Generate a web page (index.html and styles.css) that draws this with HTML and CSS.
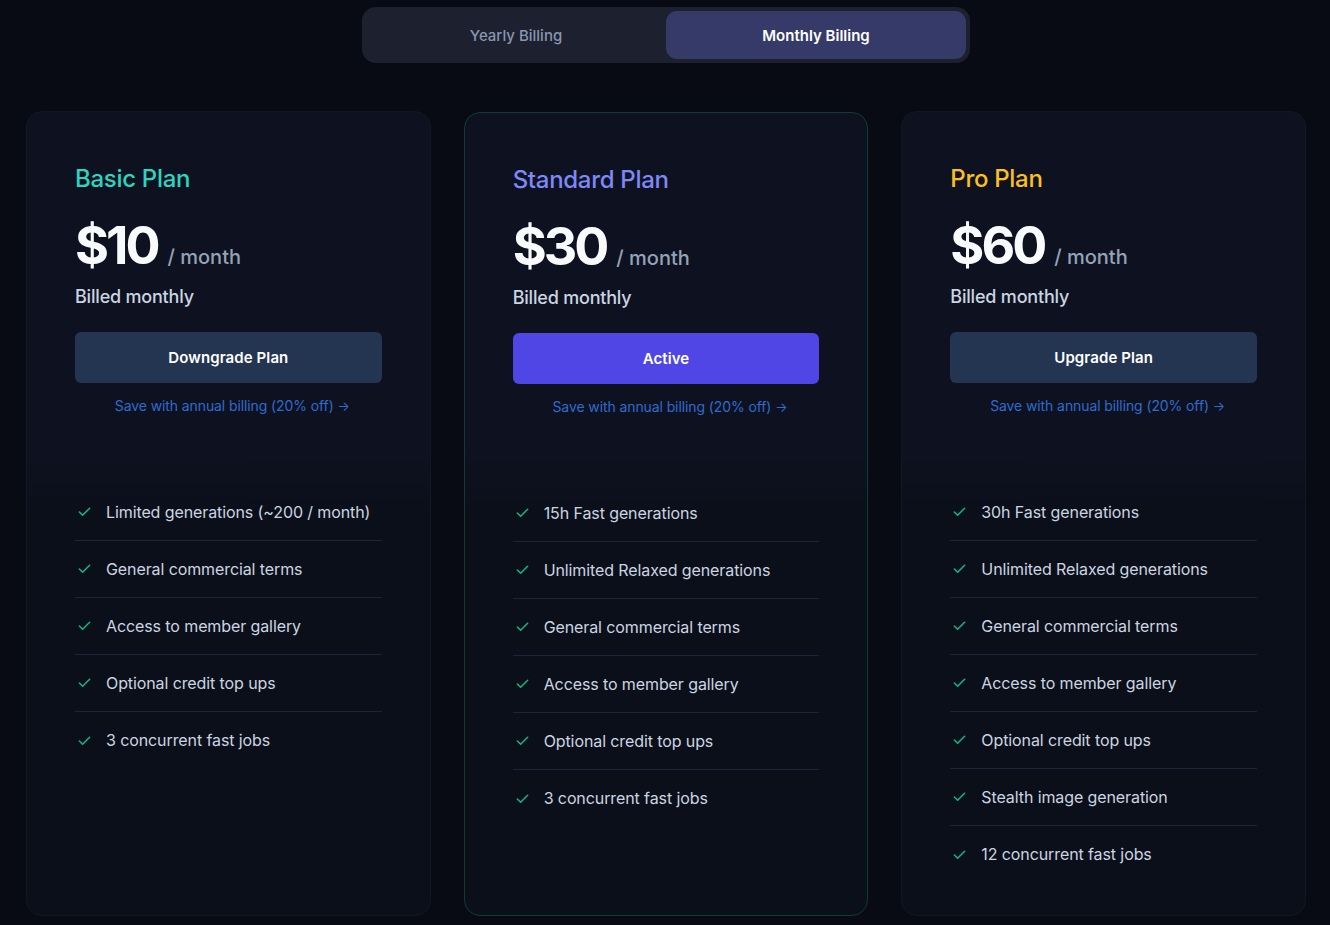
FILE: index.html
```html
<!DOCTYPE html>
<html lang="en">
<head>
<meta charset="utf-8">
<title>Pricing</title>
<link rel="stylesheet" href="styles.css">
</head>
<body>
<div class="page">
  <div class="toggle-wrap">
    <div class="toggle">
      <button class="toggle-btn">Yearly Billing</button>
      <button class="toggle-btn active">Monthly Billing</button>
    </div>
  </div>

  <div class="plans">
    <div class="card">
      <div class="card-top">
        <h2 class="plan-name basic">Basic Plan</h2>
        <div class="price-row"><span class="price">$10</span><span class="per">/ month</span></div>
        <div class="billed">Billed monthly</div>
        <button class="plan-btn">Downgrade Plan</button>
        <a class="save">Save with annual billing (20% off) <span class="arrow">&#8594;</span></a>
      </div>
      <ul class="features">
        <li><svg class="check" viewBox="0 0 16 16"><path d="M2.5 8.5l3.5 3.5 7.5-7.5"/></svg><span>Limited generations (~200 / month)</span></li>
        <li><svg class="check" viewBox="0 0 16 16"><path d="M2.5 8.5l3.5 3.5 7.5-7.5"/></svg><span>General commercial terms</span></li>
        <li><svg class="check" viewBox="0 0 16 16"><path d="M2.5 8.5l3.5 3.5 7.5-7.5"/></svg><span>Access to member gallery</span></li>
        <li><svg class="check" viewBox="0 0 16 16"><path d="M2.5 8.5l3.5 3.5 7.5-7.5"/></svg><span>Optional credit top ups</span></li>
        <li><svg class="check" viewBox="0 0 16 16"><path d="M2.5 8.5l3.5 3.5 7.5-7.5"/></svg><span>3 concurrent fast jobs</span></li>
      </ul>
    </div>

    <div class="card current">
      <div class="card-top">
        <h2 class="plan-name standard">Standard Plan</h2>
        <div class="price-row"><span class="price">$30</span><span class="per">/ month</span></div>
        <div class="billed">Billed monthly</div>
        <button class="plan-btn active">Active</button>
        <a class="save">Save with annual billing (20% off) <span class="arrow">&#8594;</span></a>
      </div>
      <ul class="features">
        <li><svg class="check" viewBox="0 0 16 16"><path d="M2.5 8.5l3.5 3.5 7.5-7.5"/></svg><span>15h Fast generations</span></li>
        <li><svg class="check" viewBox="0 0 16 16"><path d="M2.5 8.5l3.5 3.5 7.5-7.5"/></svg><span>Unlimited Relaxed generations</span></li>
        <li><svg class="check" viewBox="0 0 16 16"><path d="M2.5 8.5l3.5 3.5 7.5-7.5"/></svg><span>General commercial terms</span></li>
        <li><svg class="check" viewBox="0 0 16 16"><path d="M2.5 8.5l3.5 3.5 7.5-7.5"/></svg><span>Access to member gallery</span></li>
        <li><svg class="check" viewBox="0 0 16 16"><path d="M2.5 8.5l3.5 3.5 7.5-7.5"/></svg><span>Optional credit top ups</span></li>
        <li><svg class="check" viewBox="0 0 16 16"><path d="M2.5 8.5l3.5 3.5 7.5-7.5"/></svg><span>3 concurrent fast jobs</span></li>
      </ul>
    </div>

    <div class="card">
      <div class="card-top">
        <h2 class="plan-name pro">Pro Plan</h2>
        <div class="price-row"><span class="price">$60</span><span class="per">/ month</span></div>
        <div class="billed">Billed monthly</div>
        <button class="plan-btn">Upgrade Plan</button>
        <a class="save">Save with annual billing (20% off) <span class="arrow">&#8594;</span></a>
      </div>
      <ul class="features">
        <li><svg class="check" viewBox="0 0 16 16"><path d="M2.5 8.5l3.5 3.5 7.5-7.5"/></svg><span>30h Fast generations</span></li>
        <li><svg class="check" viewBox="0 0 16 16"><path d="M2.5 8.5l3.5 3.5 7.5-7.5"/></svg><span>Unlimited Relaxed generations</span></li>
        <li><svg class="check" viewBox="0 0 16 16"><path d="M2.5 8.5l3.5 3.5 7.5-7.5"/></svg><span>General commercial terms</span></li>
        <li><svg class="check" viewBox="0 0 16 16"><path d="M2.5 8.5l3.5 3.5 7.5-7.5"/></svg><span>Access to member gallery</span></li>
        <li><svg class="check" viewBox="0 0 16 16"><path d="M2.5 8.5l3.5 3.5 7.5-7.5"/></svg><span>Optional credit top ups</span></li>
        <li><svg class="check" viewBox="0 0 16 16"><path d="M2.5 8.5l3.5 3.5 7.5-7.5"/></svg><span>Stealth image generation</span></li>
        <li><svg class="check" viewBox="0 0 16 16"><path d="M2.5 8.5l3.5 3.5 7.5-7.5"/></svg><span>12 concurrent fast jobs</span></li>
      </ul>
    </div>
  </div>
</div>
</body>
</html>
```

FILE: styles.css
```css
* { box-sizing: border-box; }

html, body {
  margin: 0;
  padding: 0;
  background: #080b14;
  font-family: Inter, "Noto Sans", "DejaVu Sans", sans-serif;
  color: #e2e8f0;
}

.page {
  padding: 7px 24px 10px 26px;
}

.toggle-wrap {
  display: flex;
  justify-content: center;
}

.toggle {
  display: flex;
  width: 608px;
  padding: 4px;
  background: #1d202e;
  border-radius: 14px;
}

.toggle-btn {
  flex: 1;
  height: 48px;
  border: 0;
  border-radius: 11px;
  background: transparent;
  color: #8797b0;
  font-family: inherit;
  font-size: 15px;
  font-weight: 500;
  letter-spacing: 0;
}

.toggle-btn.active {
  background: #353a68;
  color: #ffffff;
  font-weight: 600;
}

.plans {
  display: grid;
  grid-template-columns: repeat(3, 1fr);
  gap: 33px;
  margin-top: 48px;
}

.card {
  display: flex;
  flex-direction: column;
  height: 805px;
  border: 1px solid #121725;
  border-radius: 16px;
  background: linear-gradient(#0e1220 0, #0e1220 340px, #0b0f1a 400px, #0b0f1a 100%);
  overflow: hidden;
}

.card.current {
  border-color: #0e3b32;
  margin-top: 1px;
  height: 804px;
}

.card-top {
  padding: 51px 48px 0;
  height: 341px;
}

.plan-name {
  margin: 0;
  font-size: 24px;
  line-height: 32px;
  font-weight: 500;
  letter-spacing: -0.3px;
}

.plan-name.basic { color: #2dd4bf; }
.plan-name.standard { color: #7e88f6; }
.plan-name.pro { color: #fbbf24; }

.price-row {
  display: flex;
  align-items: baseline;
  gap: 10px;
  margin-top: 21px;
  height: 60px;
}

.price {
  font-size: 52px;
  line-height: 60px;
  font-weight: 700;
  color: #f8fafc;
  letter-spacing: -3px;
}

.per {
  font-size: 20px;
  font-weight: 500;
  color: #94a3b8;
  letter-spacing: 0;
}

.billed {
  margin-top: 9px;
  font-size: 18px;
  line-height: 24px;
  font-weight: 500;
  color: #cbd5e1;
  letter-spacing: -0.2px;
}

.plan-btn {
  display: block;
  width: 100%;
  height: 51px;
  margin-top: 23px;
  border: 0;
  border-radius: 6px;
  background: #243552;
  color: #ffffff;
  font-family: inherit;
  font-size: 15px;
  font-weight: 600;
  letter-spacing: 0.1px;
}

.plan-btn.active {
  background: #4f46e5;
}

.save {
  display: block;
  margin-top: 13px;
  padding-left: 8px;
  text-align: center;
  font-size: 14px;
  line-height: 20px;
  color: #2f6bcf;
  letter-spacing: -0.1px;
}

.arrow {
  font-size: 13px;
}

.features {
  list-style: none;
  margin: 0;
  padding: 31px 48px 0;
}

.features li {
  display: flex;
  align-items: center;
  gap: 14px;
  height: 57px;
  padding-bottom: 1px;
  border-bottom: 1px solid #1c2536;
  font-size: 16px;
  color: #cbd5e1;
  letter-spacing: -0.1px;
}

.features li:last-child {
  border-bottom: 0;
}

.check {
  width: 15px;
  height: 15px;
  margin-left: 2px;
  flex-shrink: 0;
}

.check path {
  fill: none;
  stroke: #10b981;
  stroke-width: 1.6;
  stroke-linecap: round;
  stroke-linejoin: round;
}
```
